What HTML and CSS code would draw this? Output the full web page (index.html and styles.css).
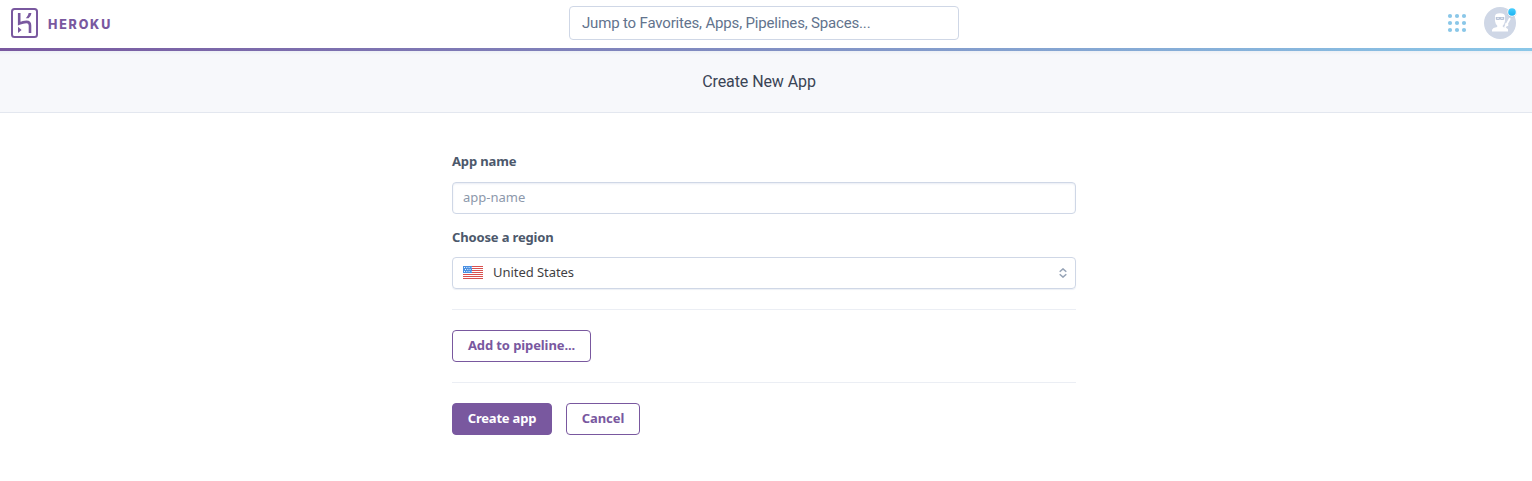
FILE: index.html
```html
<!DOCTYPE html>
<html lang="en">
<head>
<meta charset="utf-8">
<title>Create New App | Heroku</title>
<link rel="stylesheet" href="styles.css">
</head>
<body>
<header class="topbar">
  <a class="brand">
    <svg class="brand-mark" width="27" height="30" viewBox="0 0 27 30" fill="none" stroke="#79589f">
      <rect x="1" y="1" width="25" height="28" rx="2.5" stroke-width="2"/>
      <path d="M8.2 5V15.6C11 14.4 13.3 13.9 15.5 13.9C17.9 13.9 19 15 19 17.4V25" stroke-width="2.6"/>
      <path d="M7 18.8L10.6 21.9L7 25Z" fill="#79589f" stroke="none"/>
      <path d="M17.6 5H20.4C20.1 7.2 19.1 8.8 17.6 10.2H14.8C16.3 8.5 17.3 7 17.6 5Z" fill="#79589f" stroke="none"/>
    </svg>
    <span class="brand-name">HEROKU</span>
  </a>
  <div class="jump"><span class="jump-text">Jump to Favorites, Apps, Pipelines, Spaces...</span></div>
  <div class="tools">
    <svg width="20" height="20" viewBox="0 0 20 20" fill="#8ac7e8">
      <circle cx="3" cy="3" r="2.1"/><circle cx="10" cy="3" r="2.1"/><circle cx="17" cy="3" r="2.1"/>
      <circle cx="3" cy="10" r="2.1"/><circle cx="10" cy="10" r="2.1"/><circle cx="17" cy="10" r="2.1"/>
      <circle cx="3" cy="17" r="2.1"/><circle cx="10" cy="17" r="2.1"/><circle cx="17" cy="17" r="2.1"/>
    </svg>
    <svg class="avatar" width="36" height="38" viewBox="0 0 36 38">
      <defs><linearGradient id="dot" x2="0" y2="1"><stop stop-color="#48cfff"/><stop offset="1" stop-color="#1db2f0"/></linearGradient></defs>
      <circle cx="16" cy="19" r="16" fill="#cfd7e6"/>
      <path d="M11 12.5Q11 9.3 16 9.3Q21 9.3 21 12.5V17Q20.4 20.4 18.8 21.6V23L22.5 24L24 25.2V27.4H8V25.7L9.5 24L13.2 23V21.6Q11.5 20.4 11 17Z" fill="#fff"/>
      <path d="M11.8 13H20.2V15.4Q18.3 16.4 16 15.4Q13.7 16.4 11.8 15.4Z" fill="#b9c4d8"/>
      <path d="M13 14.3H15M17 14.3H19" stroke="#fff" stroke-width=".7"/>
      <path d="M20.8 23.8L26 14.3M21.2 19.8L24.2 21.5" stroke="#fff" stroke-width="1.8"/>
      <circle cx="28" cy="8.6" r="4.8" fill="#7b8aa5" opacity=".25"/>
      <circle cx="28" cy="8" r="4.7" fill="#fff"/>
      <circle cx="28" cy="8" r="3.8" fill="url(#dot)"/>
    </svg>
  </div>
</header>
<div class="rainbow"></div>
<div class="subheader"><h1 class="page-title">Create New App</h1></div>
<main class="form">
  <label class="label label-name">App name</label>
  <div class="field field-input"><span class="placeholder">app-name</span></div>
  <label class="label label-region">Choose a region</label>
  <div class="field field-select">
    <svg class="flag" width="20" height="13" viewBox="0 0 20 13" fill="none">
      <rect width="20" height="13" rx="1" fill="#fff"/>
      <g fill="#d8504f">
        <rect width="20" height="1"/><rect y="2" width="20" height="1"/><rect y="4" width="20" height="1"/><rect y="6" width="20" height="1"/><rect y="8" width="20" height="1"/><rect y="10" width="20" height="1"/><rect y="12" width="20" height="1"/>
      </g>
      <rect width="9" height="7" fill="#4a90e2"/>
      <path d="M1 1.5H8.5M2 3.5H8.5M1 5.5H8.5" stroke="#fff" stroke-dasharray="1 1.3" stroke-width=".9"/>
    </svg>
    <span class="region">United States</span>
    <svg class="caret" width="8" height="10" viewBox="0 0 8 10" fill="none" stroke="#96a3b6" stroke-width="1.5"><path d="M.7 3.8L4 .9L7.3 3.8M.7 6.2L4 9.1L7.3 6.2"/></svg>
  </div>
  <hr class="rule">
  <button class="btn btn-pipeline">Add to pipeline...</button>
  <hr class="rule">
  <div class="actions">
    <button class="btn btn-primary">Create app</button>
    <button class="btn btn-cancel">Cancel</button>
  </div>
</main>
</body>
</html>
```
FILE: styles.css
```css
* { box-sizing: border-box; }
body { margin: 0; min-height: 481px; background: #fff; color: #3f3f44; font-family: "Noto Sans", "Open Sans", sans-serif; font-size: 13px; }
.topbar { display: grid; grid-template-columns: 569px 390px 1fr; height: 48px; }
.brand { display: flex; align-items: flex-start; padding: 8px 0 0 11px; }
.brand-name { margin: 8px 0 0 10px; font: 800 12.5px/18px Inter, sans-serif; letter-spacing: 1.8px; color: #79589f; }
.jump { display: flex; align-items: center; height: 34px; margin-top: 6px; padding: 0 12px; border: 1px solid #cfd7e6; border-radius: 4px; }
.jump-text { font: 15px/20px Roboto, sans-serif; letter-spacing: -0.17px; color: #62738d; white-space: nowrap; }
.tools { display: flex; justify-content: flex-end; align-items: flex-start; gap: 17px; padding: 13px 12px 0 0; }
.avatar { margin-top: -9px; }
.rainbow { height: 3px; background: linear-gradient(90deg, #79589f, #8ac7e8); }
.subheader { height: 62px; padding: 19px 14px 0 0; background: linear-gradient(#edf0f5, #f7f8fb 4px); border-bottom: 1px solid #e3e7ef; text-align: center; }
.page-title { margin: 0; font: 400 16px/24px Roboto, sans-serif; letter-spacing: -0.08px; color: #3a4455; }
.form { width: 624px; margin: 38px 0 0 452px; }
.label { display: block; height: 20px; line-height: 20px; font-weight: 700; letter-spacing: -0.15px; color: #4c586b; }
.label-region { margin-bottom: 10px; }
.field { display: flex; align-items: center; height: 32px; padding: 0 8px 0 10px; border: 1px solid #cfd7e6; border-radius: 4px; }
.field-input { margin: 11px 0 13px; box-shadow: inset 0 1px 2px #e9edf4; }
.placeholder { padding-bottom: 2px; color: #8c98ab; }
.field-select { margin-bottom: 20px; box-shadow: 0 1px 1px #edf0f6; }
.region { margin-left: 10px; padding-bottom: 2px; letter-spacing: -0.05px; }
.flag { margin-bottom: 1px; }
.caret { margin-left: auto; }
.rule { height: 1px; margin: 0 0 20px; border: 0; background: #ebeef4; }
.btn { display: block; height: 32px; padding: 0 0 2px; border: 1px solid #79589f; border-radius: 4px; background: #fff; color: #79589f; font: 700 13px/18px "Noto Sans", sans-serif; letter-spacing: -0.1px; }
.btn-pipeline { width: 139px; margin-bottom: 20px; }
.actions { display: flex; gap: 14px; }
.btn-primary { width: 100px; background: #79589f; color: #fff; letter-spacing: -0.2px; }
.btn-cancel { width: 74px; }
```
